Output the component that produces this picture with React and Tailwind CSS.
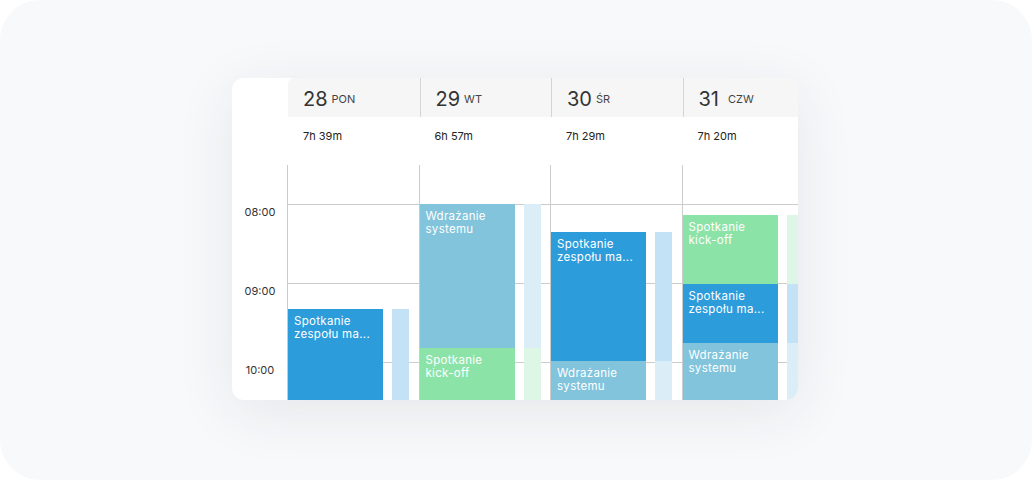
import React from "react";

const BLUE = "bg-[#2d9cdb]";
const LBLUE = "bg-[#81c4dc]";
const GREEN = "bg-[#8ce3a8]";
const G_BLUE = "bg-[#c3e2f5]";
const G_LIGHT = "bg-[#dbeef7]";
const G_GREEN = "bg-[#ddf6e5]";

const days = [
  {
    num: "28",
    name: "PON",
    dur: "7h 39m",
    events: [{ pos: "top-[144px] bottom-0", color: BLUE, text: ["Spotkanie", "zespołu ma..."] }],
    ghosts: [{ pos: "top-[144px] bottom-0", color: G_BLUE }],
  },
  {
    num: "29",
    name: "WT",
    dur: "6h 57m",
    events: [
      { pos: "top-[39px] h-[144px]", color: LBLUE, text: ["Wdrażanie", "systemu"] },
      { pos: "top-[183px] bottom-0", color: GREEN, text: ["Spotkanie", "kick-off"] },
    ],
    ghosts: [
      { pos: "top-[39px] h-[144px]", color: G_LIGHT },
      { pos: "top-[183px] bottom-0", color: G_GREEN },
    ],
  },
  {
    num: "30",
    name: "ŚR",
    dur: "7h 29m",
    events: [
      { pos: "top-[67px] h-[129px]", color: BLUE, text: ["Spotkanie", "zespołu ma..."] },
      { pos: "top-[196px] bottom-0", color: LBLUE, text: ["Wdrażanie", "systemu"] },
    ],
    ghosts: [
      { pos: "top-[67px] h-[129px]", color: G_BLUE },
      { pos: "top-[196px] bottom-0", color: G_LIGHT },
    ],
  },
  {
    num: "31",
    name: "CZW",
    dur: "7h 20m",
    events: [
      { pos: "top-[50px] h-[69px]", color: GREEN, text: ["Spotkanie", "kick-off"] },
      { pos: "top-[119px] h-[59px]", color: BLUE, text: ["Spotkanie", "zespołu ma..."] },
      { pos: "top-[178px] bottom-0", color: LBLUE, text: ["Wdrażanie", "systemu"] },
    ],
    ghosts: [
      { pos: "top-[50px] h-[69px]", color: G_GREEN },
      { pos: "top-[119px] h-[59px]", color: G_BLUE },
      { pos: "top-[178px] bottom-0", color: G_LIGHT },
    ],
  },
];

const font = { fontFamily: "Inter, 'Noto Sans', sans-serif" };

export default function App() {
  return (
    <div className="w-[1032px] h-[480px] bg-white" style={font}>
      <div className="w-full h-full rounded-[40px] bg-[#f8f9fb] pt-[78px] pl-[232px]">
        <div className="w-[566px] h-[322px] bg-white rounded-[12px] overflow-hidden shadow-[0_12px_60px_rgba(30,40,60,0.09)] flex">
          {/* gutter */}
          <div className="w-[56px] shrink-0 flex flex-col">
            <div className="h-[87px] shrink-0" />
            <div className="pt-[40px] flex flex-col">
              {["08:00", "09:00", "10:00"].map((t) => (
                <div key={t} className="h-[79px] shrink-0 text-center text-[11px] leading-[14px] text-[#333333]">
                  {t}
                </div>
              ))}
            </div>
          </div>
          {/* columns */}
          <div className="flex">
            {days.map((d, i) => (
              <div key={d.num} className="w-[131.5px] shrink-0 flex flex-col">
                <div
                  className={
                    "h-[39px] shrink-0 bg-[#f6f6f6] flex items-center pl-[15px] pt-[3px] " +
                    (i === 0 ? "rounded-tl-[6px]" : "border-l border-[#d4d4d4]")
                  }
                >
                  <span className="text-[20px] leading-none text-[#333333]">{d.num}</span>
                  <span className={"text-[11px] leading-none text-[#444444] " + (i === 3 ? "ml-[9px]" : "ml-[4px]")}>
                    {d.name}
                  </span>
                </div>
                <div className="h-[48px] shrink-0 flex items-center pl-[15px] pb-[10px] text-[11px] text-[#222222]">
                  {d.dur}
                </div>
                <div className="relative h-[235px] border-l border-[#cccccc] -ml-px">
                  <div className="pt-[39px] flex flex-col">
                    <div className="h-[79px] border-t border-[#cccccc]" />
                    <div className="h-[79px] border-t border-[#cccccc]" />
                    <div className="h-[79px] border-t border-[#cccccc]" />
                  </div>
                  {d.ghosts.map((g, k) => (
                    <div key={"g" + k} className={"absolute left-[104px] w-[17px] " + g.pos + " " + g.color} />
                  ))}
                  {d.events.map((e, k) => (
                    <div
                      key={"e" + k}
                      className={"absolute left-0 w-[95px] px-[6px] pt-[6px] text-white text-[11.5px] leading-[12.5px] tracking-[0.3px] " + e.pos + " " + e.color}
                    >
                      <div>{e.text[0]}</div>
                      <div>{e.text[1]}</div>
                    </div>
                  ))}
                </div>
              </div>
            ))}
          </div>
        </div>
      </div>
    </div>
  );
}
